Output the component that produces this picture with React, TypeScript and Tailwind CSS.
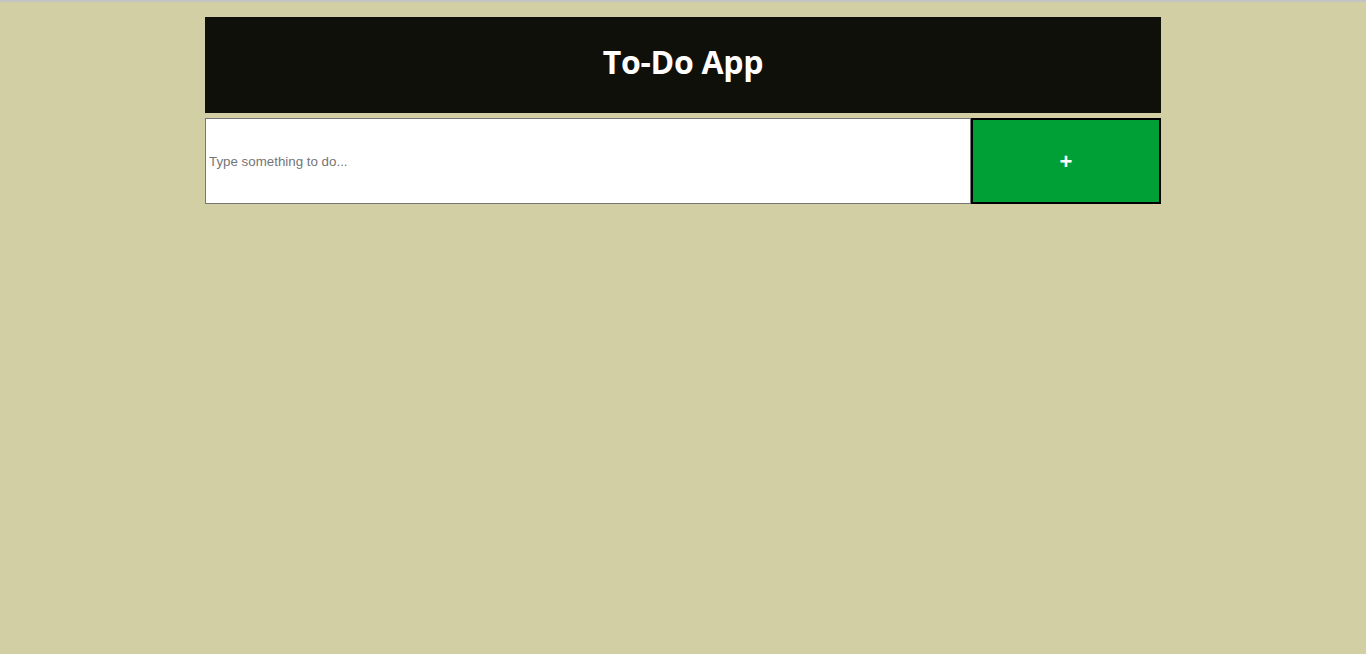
import { useState } from "react";

export default function App() {
  const [task, setTask] = useState("");
  const [todos, setTodos] = useState<string[]>([]);

  function addTodo() {
    if (!task.trim()) return;
    setTodos([...todos, task.trim()]);
    setTask("");
  }

  return (
    <div className="min-h-[654px] bg-[#d3cfa5] border-t-2 border-[#c4c4c4] pt-[15px]">
      <div className="mx-auto w-[956px]">
        {/* Header */}
        <div className="h-[96px] bg-[#10100a] flex items-center justify-center">
          <h1 className="text-white font-bold text-[32px] leading-none mb-[7px] font-['Open_Sans',sans-serif] tracking-[-0.3px]">
            To-Do App
          </h1>
        </div>

        {/* Saisie */}
        <div className="flex mt-[5px] h-[86px]">
          <input
            value={task}
            onChange={(e) => setTask(e.target.value)}
            placeholder="Type something to do..."
            className="flex-1 bg-white border border-[#767676] px-[3px] pt-[2px] text-[13.33px] font-['Liberation_Sans',Arial,sans-serif] text-black placeholder:text-[#757575] outline-none"
          />
          <button
            onClick={addTodo}
            className="w-[190px] bg-[#00a036] border-2 border-black text-white text-[22px] font-bold font-['Liberation_Sans',Arial,sans-serif]"
          >
            +
          </button>
        </div>

        {todos.map((t, i) => (
          <div key={i} className="bg-white px-3 py-2 mt-1 text-sm">{t}</div>
        ))}
      </div>
    </div>
  );
}
